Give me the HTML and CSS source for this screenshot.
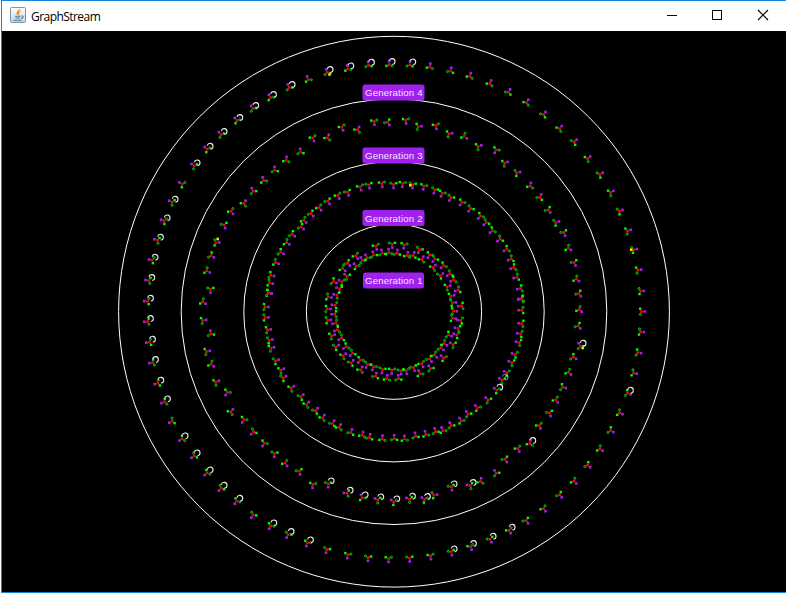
FILE: index.html
```html
<!DOCTYPE html>
<html lang="en">
<head>
<meta charset="utf-8">
<title>GraphStream</title>
<link rel="stylesheet" href="styles.css">
</head>
<body>
<div class="window">
  <header class="titlebar">
    <svg class="app-icon" width="16" height="16" viewBox="0 0 16 16">
      <defs><linearGradient id="tile" x2="0" y2="1"><stop stop-color="#fff"/><stop offset="1" stop-color="#c4d2dc"/></linearGradient></defs>
      <rect x=".5" y=".5" width="15" height="15" rx="1" fill="url(#tile)" stroke="#8295a5"/>
      <path d="M9.500 2C10 4 6 4.500 7.500 7.500M10.500 4.500C8 5.500 8 6.500 9 8" fill="none" stroke="#ee8523" stroke-width="1.200"/>
      <path d="M5 9.200h5.500M5.500 11h4.500M3.500 13.200h8M11.500 9c2.500-.5 2 2-.5 2.500" fill="none" stroke="#4b7896" stroke-width="1.100"/>
    </svg>
    <h1 class="title">GraphStream</h1>
    <svg class="controls" width="102" height="12" viewBox="0 0 102 12" fill="none" stroke="#000">
      <path d="M0 6.500h10M45.500 1.500h9v9h-9z" shape-rendering="crispEdges"/>
      <path d="M91 1l10 10M101 1l-10 10" stroke-width="1.100"/>
    </svg>
  </header>
  <main class="view">
    <svg id="graph" class="graph" width="784" height="561" viewBox="2 31 784 561">
      <g class="orbits">
        <circle cx="394" cy="311.700" r="275.400"/>
        <circle cx="394" cy="311.700" r="212.800"/>
        <circle cx="394" cy="311.700" r="150.200"/>
        <circle cx="394" cy="311.700" r="87.600"/>
      </g>
      <g id="nodes"></g>
      <g class="labels">
        <rect x="362.500" y="84.500" width="62" height="16" rx="2.500"/><text x="365" y="96" textLength="57.500">Generation 4</text>
        <rect x="362.500" y="147.500" width="62" height="16" rx="2.500"/><text x="365" y="159" textLength="57.500">Generation 3</text>
        <rect x="362.500" y="210" width="62" height="16" rx="2.500"/><text x="365" y="222" textLength="57.500">Generation 2</text>
        <rect x="363" y="272.500" width="61" height="16" rx="2.500"/><text x="365" y="284" textLength="57.500">Generation 1</text>
      </g>
    </svg>
  </main>
</div>
<script src="graph.js"></script>
</body>
</html>
```
FILE: styles.css
```css
body {
  margin: 0;
  background: #fff;
}
.window {
  box-sizing: border-box;
  width: 785px;
  height: 593px;
  margin-left: 1px;
  border: solid #1883d7;
  border-width: 1px 0 1px 1px;
  display: flex;
  flex-direction: column;
  overflow: hidden;
}
.titlebar {
  height: 30px;
  flex: none;
  display: flex;
  align-items: center;
  padding: 0 17px 0 8px;
  background: #fff;
}
.app-icon {
  margin-bottom: 2px;
}
.title {
  margin: 0 auto 0 5px;
  font: 12px "Open Sans", "Noto Sans", sans-serif;
  letter-spacing: -0.55px;
  color: #000;
}
.controls {
  margin-bottom: 2px;
}
.view {
  flex: 1;
  background: #000;
}
.graph {
  display: block;
}
.orbits circle {
  fill: none;
  stroke: #fff;
  stroke-width: 1;
}
.labels rect {
  fill: #a020f0;
}
.labels text {
  font: 9.6px "Liberation Sans", Arial, sans-serif;
  fill: #f4e6fe;
}
.root { fill: #e00808; }
.parent { fill: #a020f0; }
.leaf { fill: #00ff00; }
.leaf-ring { fill: #005000; stroke: #00c810; stroke-width: 0.9; }
.mark { fill: #f0e000; }
.edge { stroke: #701010; stroke-width: 0.7; }
.loop { fill: none; stroke: #eee; stroke-width: 1.1; }
```
FILE: graph.js
```js
// Each group: origin of its area, link direction (1 outward, -1 inward, 0 explicit),
// and nodes "x,y[,px,py][L]" in thirds of a pixel. L = self loop.
const groups = [
  [300, 30, 1, "24,148 81,127L 143,116L 205,105L 267,103L 329,104L 389,110 451,122 509,138"],
  [110, 40, 1, "537,142L 481,172L 428,205L 380,241L 333,283L 291,327L 252,377L 216,432 186,486L 162,542L 142,600L 126,660L 116,721L"],
  [110, 290, 1, "112,33L 112,94L 118,156L 127,217L 143,279L 163,335L 186,393 216,446L 252,497L 291,548L 333,594L 380,633L 429,674 482,707L 534,733L 592,758L"],
  [300, 460, 1, "80,268 143,284 204,292 265,295 328,294 391,287 453,275L 511,259L"],
  [480, 290, 1, "30,747L 87,720L 138,691 190,655 238,614 281,573 322,525 359,476 391,421 418,368 442,309L 460,248 473,187 481,125 484,64 481,3"],
  [480, 40, 1, "473,690 460,629 442,572 418,513 391,457 359,403 322,355 282,305 238,265 190,223 139,187 85,156 29,130"],

  [300, 30, 0, "38,323,42,334 82,323,85,315 125,291,129,301 172,299,177,290 222,274,223,285 262,276,266,282 317,270,318,283 354,289,363,288 407,286,409,297 446,311,456,309 492,318,500,325 534,349,542,346"],
  [110, 40, 0, "571,336,570,325 528,360,529,351 494,390,493,380 460,421,457,411 429,453,425,445 401,490,407,480 363,513,369,522 342,554,345,564 317,607,327,607 303,646,312,652 290,692,299,697 301,747,301,757"],
  [110, 290, 0, "278,35,287,41 278,91,287,89 302,131,300,120 289,184,299,182 303,222,311,229 317,276,327,271 351,306,346,315 362,365,369,356 401,388,396,397 430,425,423,432 462,459,457,467 493,490,492,499 525,519,530,526 567,543,570,553"],
  [300, 460, 0, "38,73,37,82 84,71,84,83L 141,99,131,98L 186,113,182,103L 233,119,225,115L 281,125,271,118L 328,117,321,114L 373,118,366,113L 401,105,411,103 453,80,456,92L 510,76,501,74L 541,64,543,53"],
  [480, 290, 0, "48,549,43,541 75,507,79,514 113,475,117,483 149,460,151,450L 177,406,181,415 208,368,211,378 227,329,233,337 247,291,255,293 265,246,271,252 279,201,288,206 300,168,296,160L 294,107,301,115 297,58,305,65 296,10,302,18"],
  [480, 40, 0, "288,717,295,722 282,667,286,676 264,624,272,629 251,577,255,587 227,547,235,544 204,509,210,517 179,472,183,463 150,438,152,429 110,398,118,396 73,369,81,366 48,329,43,338"],

  [300, 170, -1, "3,170 11,150 33,130 57,112 83,93 113,76 142,66 180,50 206,44 245,40 280,43 307,40 338,43 371,48 404,59 426,69 452,82 485,96 511,115 541,137 558,157"],
  [480, 40, -1, "37,571 60,597 80,627 93,656 101,682 110,711 121,745 125,775"],
  [480, 290, -1, "124,27 125,60 125,100 121,131 117,157 105,193 95,217 80,248 66,270D 50,300L 24,329"],
  [300, 290, -1, "532,353 504,372 483,392 453,406 428,421 406,424 377,433 346,438 313,447 282,445 246,446 208,442 186,435 152,427 117,412 97,400 67,383 46,362 19,343 2,320"],
  [110, 290, -1, "543,294 519,263 512,240 496,212 482,174 477,150 472,119 465,82 465,50 475,9"],
  [110, 40, -1, "474,758 478,728 482,705 496,667 511,636 529,607 546,582"],

  [300, 170, -1, "227,228 276,222 312,224 358,238 388,254 404,266 430,286 449,311 460,329 474,359 167,257 142,279 127,295 100,334"],
  [300, 170, 1, "246,249 266,247 291,249 321,256 339,256 365,268 221,254 200,263 187,270 168,288 141,318 125,335 118,356 399,292 420,316 441,350"],
  [300, 290, -1, "484,47 482,91 474,115 470,134 459,163 430,203 391,235 359,251 295,265 260,265 226,258 181,239 153,218 129,197 107,170 94,137 82,90 81,56 84,20"],
  [300, 290, 1, "452,18 457,38 460,63 457,84 445,134 432,160 422,173 403,194 388,206 364,221 340,232 318,241 302,242 275,240 247,238 220,230 202,223 180,209 157,189 138,169 124,144 112,119 107,99 104,72 105,45 110,15"]
];
const marks = [[329.5, 74.5], [217.7, 239], [631.2, 249.7], [410.3, 185.3], [582.7, 348]];

const square = (cls, x, y, s) =>
  `<rect class="${cls}" x="${(x - s / 2).toFixed(1)}" y="${(y - s / 2).toFixed(1)}" width="${s}" height="${s}"/>`;

let out = "";
let index = 0;
for (const [ox, oy, dir, list] of groups) {
  for (const item of list.split(" ")) {
    const [nx, ny, px, py] = item.replace(/[LD]/g, "").split(",").map(Number);
    const x = ox + nx / 3 + 0.2, y = oy + ny / 3 + 0.2;
    const angle = dir ? Math.atan2((y - 311.7) * dir, (x - 394) * dir) : Math.atan2(py - ny, px - nx);
    const at = (turn, d) => [x + Math.cos(angle + turn) * d, y + Math.sin(angle + turn) * d];
    const p = at(0, 3.3), a = at(2, 3.1), b = at(-2, 3.1);
    const [solid, hollow] = index++ % 2 ? [a, b] : [b, a];
    for (const q of [p, a, b]) out += `<line class="edge" x1="${x}" y1="${y}" x2="${q[0]}" y2="${q[1]}"/>`;
    out += square("root", x, y, 2.7) + square("parent", ...p, 2.6) + square("leaf", ...solid, 2.4);
    out += `<circle class="leaf-ring" cx="${hollow[0]}" cy="${hollow[1]}" r="1.1"/>`;
    if (/[LD]/.test(item)) {
      const cx = x + 3, cy = y - 3, faint = item.includes("D") ? ' opacity="0.5"' : "";
      out += `<path class="loop"${faint} d="M${cx - 2.9} ${cy - 0.6}A2.9 2.9 0 1 1 ${cx + 0.3} ${cy + 2.9}"/>`;
    }
  }
}
for (const [x, y] of marks) out += square("mark", x, y, 2.6);
document.getElementById("nodes").innerHTML = out;
```
